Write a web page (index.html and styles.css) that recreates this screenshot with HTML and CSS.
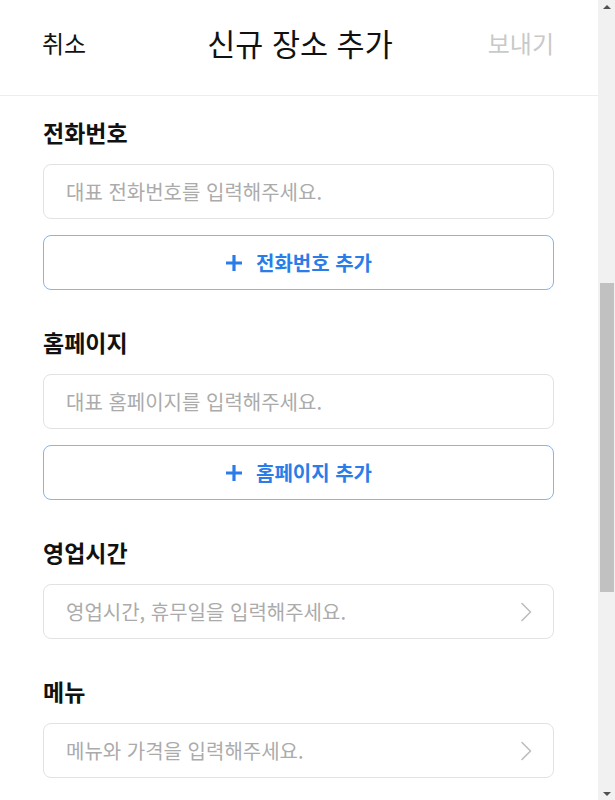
FILE: index.html
```html
<!DOCTYPE html>
<html lang="ko">
<head>
<meta charset="utf-8">
<title>신규 장소 추가</title>
<link rel="stylesheet" href="styles.css">
</head>
<body>
<div class="window">
  <div class="app">
    <header class="topbar">
      <button class="bar-btn cancel" type="button">취소</button>
      <h1 class="title">신규 장소 추가</h1>
      <button class="bar-btn send" type="button">보내기</button>
    </header>
    <main class="form">
      <section class="field">
        <h2 class="label">전화번호</h2>
        <input class="text-input" type="text" placeholder="대표 전화번호를 입력해주세요.">
        <button class="add-btn" type="button">
          <svg class="plus" viewBox="0 0 18 18" width="18" height="18"><path d="M9 1 V17 M1 9 H17" stroke="#2a7de9" stroke-width="3.2" fill="none"/></svg>
          <span>전화번호 추가</span>
        </button>
      </section>
      <section class="field">
        <h2 class="label">홈페이지</h2>
        <input class="text-input" type="text" placeholder="대표 홈페이지를 입력해주세요.">
        <button class="add-btn" type="button">
          <svg class="plus" viewBox="0 0 18 18" width="18" height="18"><path d="M9 1 V17 M1 9 H17" stroke="#2a7de9" stroke-width="3.2" fill="none"/></svg>
          <span>홈페이지 추가</span>
        </button>
      </section>
      <section class="field">
        <h2 class="label">영업시간</h2>
        <div class="select-row"><span>영업시간, 휴무일을 입력해주세요.</span>
          <svg class="chev" viewBox="0 0 12 20" width="12" height="20"><path d="M2 1.5 L10.5 10 L2 18.5" fill="none" stroke="#bdbdbd" stroke-width="1.6" stroke-linecap="round" stroke-linejoin="round"/></svg>
        </div>
      </section>
      <section class="field">
        <h2 class="label">메뉴</h2>
        <div class="select-row"><span>메뉴와 가격을 입력해주세요.</span>
          <svg class="chev" viewBox="0 0 12 20" width="12" height="20"><path d="M2 1.5 L10.5 10 L2 18.5" fill="none" stroke="#bdbdbd" stroke-width="1.6" stroke-linecap="round" stroke-linejoin="round"/></svg>
        </div>
      </section>
    </main>
  </div>
  <div class="scrollbar" aria-hidden="true">
    <span class="arrow up"></span>
    <div class="track">
      <div class="thumb"></div>
    </div>
    <span class="arrow down"></span>
  </div>
</div>
</body>
</html>
```
FILE: styles.css
```css
* { box-sizing: border-box; }
html, body { margin: 0; padding: 0; }
body {
  background: #fff;
  font-family: "Noto Sans CJK KR", "Noto Sans", sans-serif;
  color: #111;
  overflow: hidden;
}
.window {
  display: flex;
  height: 800px;
  overflow: hidden;
}
.app {
  flex: 1;
  min-width: 0;
  display: flex;
  flex-direction: column;
}
.topbar {
  flex: none;
  height: 96px;
  background: #fff;
  border-bottom: 1px solid #ededed;
  display: grid;
  grid-template-columns: 1fr auto 1fr;
  align-items: center;
  padding: 0 44px 10px 42px;
}
.bar-btn {
  border: 0;
  background: none;
  padding: 0;
  font-family: inherit;
  font-size: 24px;
  line-height: 30px;
}
.cancel { color: #111; justify-self: start; }
.send { color: #c9c9c9; justify-self: end; }
.title {
  margin: 0;
  font-size: 30.5px;
  font-weight: 400;
  line-height: 40px;
  color: #111;
  transform: translateX(2px);
}
.form {
  flex: 1;
  overflow: hidden;
  padding: 21px 44px 0 43px;
}
.field {
  padding-top: 37px;
  display: flex;
  flex-direction: column;
}
.field:first-child { padding-top: 0; }
.label {
  margin: 0 0 17px;
  font-size: 23px;
  line-height: 30px;
  font-weight: 700;
  color: #111;
}
.text-input, .select-row {
  width: 100%;
  height: 55px;
  border: 1px solid #e2e2e2;
  border-radius: 8px;
  background: #fff;
  font-family: inherit;
  font-size: 20px;
  color: #333;
  padding: 0 22px;
  outline: none;
}
.text-input::placeholder { color: #ababab; }
.select-row {
  display: flex;
  align-items: center;
  justify-content: space-between;
  color: #ababab;
  padding-right: 21px;
}
.chev { flex: none; }
.add-btn {
  margin-top: 16px;
  width: 100%;
  height: 55px;
  border: 1px solid #80b6f8;
  border-radius: 8px;
  background: #fff;
  display: flex;
  align-items: center;
  justify-content: center;
  gap: 13px;
  font-family: inherit;
  font-size: 20px;
  font-weight: 700;
  color: #2a7de9;
}
.plus { flex: none; }

.scrollbar {
  flex: none;
  width: 17px;
  background: #f1f1f1;
  display: flex;
  flex-direction: column;
  align-items: center;
}
.arrow {
  flex: none;
  width: 0;
  height: 0;
  border-left: 4.5px solid transparent;
  border-right: 4.5px solid transparent;
}
.arrow.up {
  margin: 5px 0 6px;
  border-bottom: 4px solid #505050;
}
.arrow.down {
  margin: 6px 0 4px;
  border-top: 4px solid #505050;
}
.track {
  flex: 1;
  width: 100%;
  padding: 268px 1px 194px 2px;
  display: flex;
}
.thumb {
  flex: 1;
  background: #c1c1c1;
}
```
